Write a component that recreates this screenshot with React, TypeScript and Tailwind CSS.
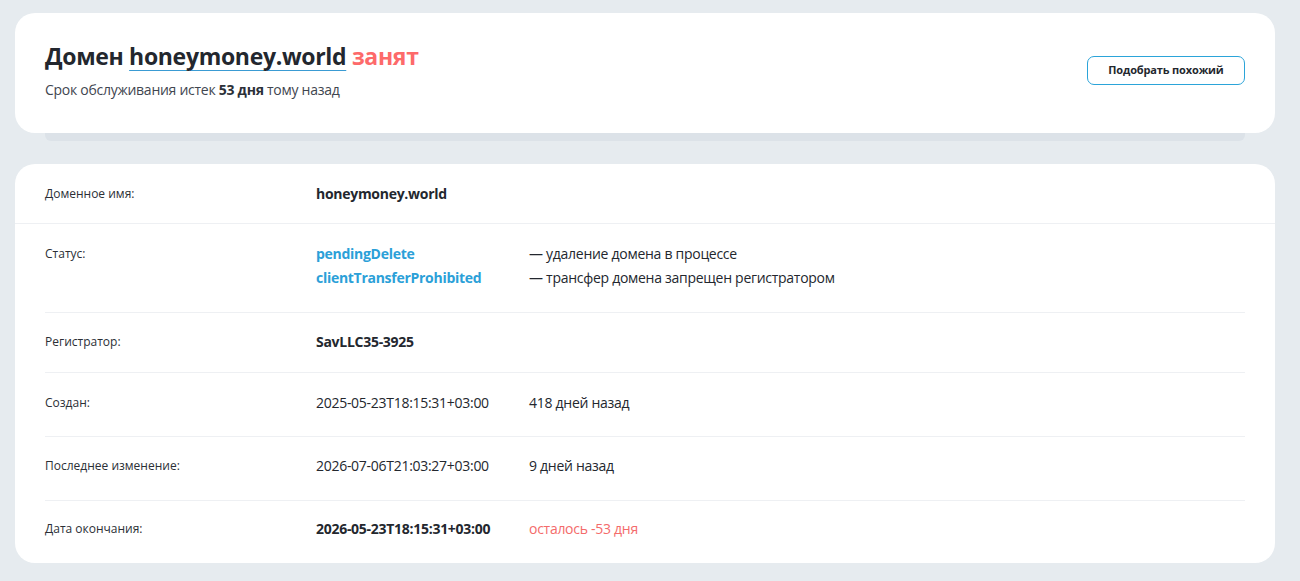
const font = { fontFamily: '"Open Sans", "Noto Sans", sans-serif' }

type Row = {
  label: string
  pad: string
  content: React.ReactNode
}

function InfoRow({ label, pad, children, last }: { label: string; pad: string; children: React.ReactNode; last?: boolean }) {
  return (
    <div className={`flex mx-[30px] ${pad} ${last ? '' : 'border-b border-[#eef0f3]'}`}>
      <div className="w-[271px] shrink-0 text-[12px] leading-[24px] text-[#2b2f36]">{label}</div>
      <div className="flex-1">{children}</div>
    </div>
  )
}

function Pair({ left, right, leftClass, rightClass }: { left: string; right?: string; leftClass?: string; rightClass?: string }) {
  return (
    <div className="flex text-[14px] leading-[24px] tracking-[-0.28px]">
      <div className={`w-[213px] shrink-0 ${leftClass ?? 'text-[#23272e]'}`}>{left}</div>
      {right && <div className={rightClass ?? 'text-[#23272e]'}>{right}</div>}
    </div>
  )
}

export default function App() {
  const rows: Row[] = [
    {
      label: 'Статус:',
      pad: 'pt-[18px] pb-[22px]',
      content: (
        <>
          <Pair left="pendingDelete" leftClass="font-bold text-[#2ba0d8]" right="— удаление домена в процессе" />
          <Pair left="clientTransferProhibited" leftClass="font-bold text-[#2ba0d8]" right="— трансфер домена запрещен регистратором" />
        </>
      ),
    },
    {
      label: 'Регистратор:',
      pad: 'pt-[17px] pb-[18px]',
      content: <Pair left="SavLLC35-3925" leftClass="font-bold text-[#23272e]" />,
    },
    {
      label: 'Создан:',
      pad: 'pt-[18px] pb-[21px]',
      content: <Pair left="2025-05-23T18:15:31+03:00" right="418 дней назад" />,
    },
    {
      label: 'Последнее изменение:',
      pad: 'pt-[17px] pb-[22px]',
      content: <Pair left="2026-07-06T21:03:27+03:00" right="9 дней назад" />,
    },
    {
      label: 'Дата окончания:',
      pad: 'pt-[16px] pb-[22px]',
      content: (
        <Pair
          left="2026-05-23T18:15:31+03:00"
          leftClass="font-bold text-[#23272e]"
          right="осталось -53 дня"
          rightClass="text-[#f46b6b]"
        />
      ),
    },
  ]

  return (
    <div className="min-h-[581px] bg-[#e6ebef] pl-[15px] pr-[25px] pt-[13px] pb-[18px]" style={font}>
      {/* Header card */}
      <div>
        <div className="flex items-center justify-between bg-white rounded-[20px] px-[30px] pt-[27px] pb-[33px]">
          <div>
            <h1 className="text-[23px] leading-[32px] font-bold tracking-[-0.32px] text-[#23272e]">
              Домен{' '}
              <span className="underline decoration-[#3a9bd3] decoration-1 underline-offset-[5px]">honeymoney.world</span>{' '}
              <span className="text-[#fd6a6a]">занят</span>
            </h1>
            <p className="mt-[8px] text-[14px] leading-[20px] tracking-[-0.27px] text-[#3f4650]">
              Срок обслуживания истек <b className="text-[#2b3038]">53 дня</b> тому назад
            </p>
          </div>
          <button className="w-[158px] h-[29px] border border-[#2ba4d9] rounded-[7px] text-[11px] font-bold tracking-[-0.15px] text-[#23272e]">
            Подобрать похожий
          </button>
        </div>
        <div className="mx-[30px] h-[8px] bg-[#dce2e8] rounded-b-[6px]" />
      </div>

      {/* Whois card */}
      <div className="mt-[23px] bg-white rounded-[20px]">
        <div className="border-b border-[#eef0f3]">
          <div className="flex mx-[30px] pt-[18px] pb-[17px]">
            <div className="w-[271px] shrink-0 text-[12px] leading-[24px] text-[#2b2f36]">Доменное имя:</div>
            <Pair left="honeymoney.world" leftClass="font-bold text-[#23272e]" />
          </div>
        </div>
        {rows.map((r, i) => (
          <InfoRow key={r.label} label={r.label} pad={r.pad} last={i === rows.length - 1}>
            {r.content}
          </InfoRow>
        ))}
      </div>
    </div>
  )
}
